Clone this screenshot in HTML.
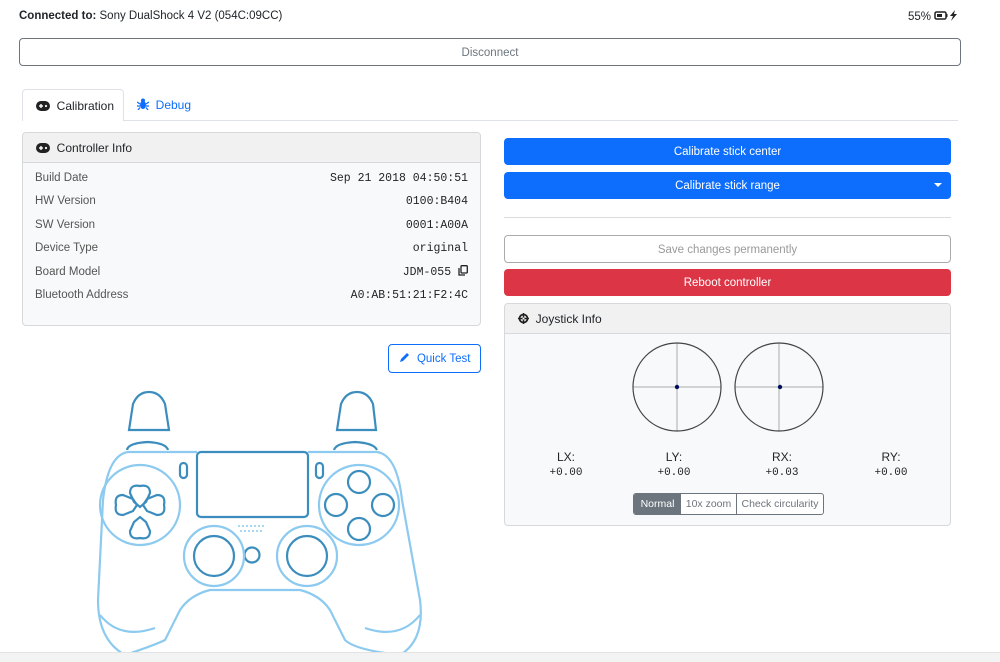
<!DOCTYPE html>
<html><head><meta charset="utf-8"><style>
*{box-sizing:border-box;margin:0;padding:0}
body{width:1000px;height:662px;background:#fff;font-family:"Liberation Sans",sans-serif;font-size:12px;color:#212529;position:relative;overflow:hidden}
.a{position:absolute}
.mono{font-family:"Liberation Mono",monospace;font-size:11px}
.btn{position:absolute;border-radius:4px;text-align:center;font-size:11.5px}
</style></head><body>
<div class="a" style="left:19px;top:10px;font-size:11.5px"><b>Connected to:</b> Sony DualShock 4 V2 (054C:09CC)</div>
<div class="a" style="left:908px;top:10px;font-size:11.5px">55%
<svg width="26" height="11" viewBox="0 0 26 11" style="vertical-align:-1px"><rect x="1" y="2" width="11" height="7" rx="1.5" fill="none" stroke="#222" stroke-width="1.5"/><rect x="3" y="4" width="5" height="3" fill="#222"/><rect x="12" y="4" width="1.5" height="3" fill="#222"/><path d="M21 0 L16 6 H19 L17 11 L23 4 H20 Z" fill="#222"/></svg></div>
<div class="btn" style="left:19px;top:38px;width:942px;height:28px;border:1px solid #6c757d;color:#6c757d;line-height:28px">Disconnect</div>

<div class="a" style="left:22px;top:120px;width:936px;height:1px;background:#dee2e6"></div>
<div class="a" style="left:22px;top:89px;width:102px;height:32px;border:1px solid #dee2e6;border-bottom:none;border-radius:4px 4px 0 0;background:#fff;padding:9px 0 0 13px;font-size:12px">
<svg width="14" height="10" viewBox="0 0 14 10" style="vertical-align:-1px"><rect x="0" y="0" width="14" height="10" rx="5" fill="#222"/><rect x="3" y="4.3" width="4" height="1.4" fill="#fff"/><rect x="4.3" y="3" width="1.4" height="4" fill="#fff"/><circle cx="10" cy="5" r="1.1" fill="#fff"/></svg>&nbsp; Calibration</div>
<div class="a" style="left:137px;top:98px;color:#0d6efd;font-size:12px">
<svg width="12" height="12" viewBox="0 0 12 12" style="vertical-align:-1px"><ellipse cx="6" cy="7" rx="3" ry="4" fill="#0d6efd"/><circle cx="6" cy="2.5" r="2" fill="#0d6efd"/><path d="M0 4 L3 6 M12 4 L9 6 M0 8 H3 M12 8 H9 M1 12 L3 9.5 M11 12 L9 9.5" stroke="#0d6efd" stroke-width="1.3"/></svg>&nbsp; Debug</div>

<div class="a" style="left:22px;top:132px;width:459px;height:194px;border:1px solid #d6d8db;border-radius:4px;background:#f8f9fa;overflow:hidden">
<div style="height:30px;background:#f1f1f1;border-bottom:1px solid #d6d8db;padding:8px 0 0 13px;font-size:12px">
<svg width="14" height="10" viewBox="0 0 14 10" style="vertical-align:-1px"><rect x="0" y="0" width="14" height="10" rx="5" fill="#222"/><rect x="3" y="4.3" width="4" height="1.4" fill="#fff"/><rect x="4.3" y="3" width="1.4" height="4" fill="#fff"/><circle cx="10" cy="5" r="1.1" fill="#fff"/></svg>&nbsp; Controller Info</div>
</div>
<div class="a" style="left:35px;top:167px;color:#555;line-height:23.4px;font-size:11.5px">Build Date<br>HW Version<br>SW Version<br>Device Type<br>Board Model<br>Bluetooth Address</div>
<div class="a mono" style="right:532px;top:167px;line-height:23.4px;text-align:right;font-size:11.5px">Sep 21 2018 04:50:51<br>0100:B404<br>0001:A00A<br>original<br>JDM-055 <svg width="10" height="11" viewBox="0 0 10 11" style="vertical-align:-1px"><rect x="3" y="0.7" width="6.3" height="7.3" rx="1" fill="none" stroke="#222" stroke-width="1.3"/><path d="M1 3 V10 H7" fill="none" stroke="#222" stroke-width="1.3"/></svg><br>A0:AB:51:21:F2:4C</div>

<div class="btn" style="left:388px;top:344px;width:93px;height:29px;border:1px solid #0d6efd;color:#0d6efd;line-height:28px">
<svg width="12" height="12" viewBox="0 0 12 12" style="vertical-align:-1px"><path d="M1 11 L2 8 L8 2 L10 4 L4 10 Z" fill="#0d6efd"/></svg>&nbsp; Quick Test</div>

<svg class="a" style="left:95px;top:385px" width="340" height="277" viewBox="95 385 340 277">
<g fill="none" stroke-width="2.2">
<g stroke="#3b8dbd">
<path d="M129 430 L133 404 Q138 392 149 392 Q160 392 165 404 L169 430 Z"/>
<path d="M337 430 L341 404 Q346 392 357 392 Q368 392 373 404 L376 430 Z"/>
<path d="M127 450 Q128 443 148 442 Q166 443 168 450"/>
<path d="M334 450 Q336 443 355 442 Q374 443 377 450"/>
<rect x="197" y="452" width="111" height="65" rx="4"/>
<rect x="180" y="463" width="7" height="15" rx="3.5"/>
<rect x="316" y="463" width="7" height="15" rx="3.5"/>
<path d="M140 486 Q150 484 150 493 L146 502 L140 507 L134 502 L130 493 Q130 484 140 486 Z"/>
<path d="M140 538 Q150 540 150 531 L146 522 L140 517 L134 522 L130 531 Q130 540 140 538 Z"/>
<path d="M116 505 Q114 495 123 495 L133 499 L137 505 L133 511 L123 515 Q114 515 116 505 Z"/>
<path d="M164 505 Q166 495 157 495 L147 499 L143 505 L147 511 L157 515 Q166 515 164 505 Z"/>
<circle cx="359" cy="482" r="11"/><circle cx="359" cy="529" r="11"/><circle cx="336" cy="505" r="11"/><circle cx="383" cy="505" r="11"/>
<circle cx="214" cy="556" r="20"/><circle cx="307" cy="556" r="20"/><circle cx="252" cy="555" r="7.5"/>
</g>
<g stroke="#8ccaf0">
<path d="M128 452 L197 452 M308 452 L377 452"/>
<path d="M128 452 Q108 455 103 500 L98 600 Q98 640 125 655 M377 452 Q397 455 402 500 L420 600 Q425 640 400 655"/>
<path d="M125 655 Q155 645 165 640 L180 610 Q190 595 210 590 L300 590 Q320 595 330 610 L345 640 Q355 650 400 655"/>
<path d="M100 615 Q120 640 155 628 M420 615 Q400 640 365 628"/>
<circle cx="140" cy="505" r="40"/><circle cx="359" cy="505" r="40"/>
<circle cx="214" cy="556" r="30"/><circle cx="307" cy="556" r="30"/>
</g>
<g stroke="#8ccaf0" stroke-dasharray="2 2" stroke-width="1.5"><path d="M238 526 H266 M240 531 H264"/></g>
</g></svg>
<div class="a" style="left:0;top:652px;width:1000px;height:10px;background:#f3f3f3;border-top:1px solid #e3e3e3"></div>

<div class="btn" style="left:504px;top:138px;width:447px;height:27px;background:#0d6efd;color:#fff;line-height:29px">Calibrate stick center</div>
<div class="btn" style="left:504px;top:172px;width:447px;height:27px;background:#0d6efd;color:#fff;line-height:29px">Calibrate stick range<span style="position:absolute;right:9px;top:11px;border:4px solid transparent;border-top:4px solid #fff;border-bottom:none"></span></div>
<div class="a" style="left:504px;top:217px;width:447px;height:1px;background:#dcdcdc"></div>
<div class="btn" style="left:504px;top:235px;width:447px;height:28px;border:1px solid #ababab;color:#9a9a9a;line-height:28px">Save changes permanently</div>
<div class="btn" style="left:504px;top:269px;width:447px;height:27px;background:#dc3545;color:#fff;line-height:29px">Reboot controller</div>

<div class="a" style="left:504px;top:303px;width:447px;height:223px;border:1px solid #d6d8db;border-radius:4px;background:#f8f9fa;overflow:hidden">
<div style="height:30px;background:#f1f1f1;border-bottom:1px solid #d6d8db;padding:8px 0 0 13px">
<svg width="11" height="11" viewBox="0 0 11 11" style="vertical-align:-1px"><circle cx="5.5" cy="5.5" r="4" fill="none" stroke="#222" stroke-width="1.8"/><path d="M5.5 0 V11 M0 5.5 H11" stroke="#222" stroke-width="1.5"/><circle cx="5.5" cy="5.5" r="1" fill="#fff"/></svg>&nbsp; Joystick Info</div>
</div>
<svg class="a" style="left:630px;top:340px" width="200" height="95">
<g stroke="#aaa" stroke-width="1"><path d="M3 47 H91 M47 3 V91 M105 47 H193 M149 3 V91"/></g>
<circle cx="47" cy="47" r="44" fill="none" stroke="#444" stroke-width="1.2"/>
<circle cx="149" cy="47" r="44" fill="none" stroke="#444" stroke-width="1.2"/>
<circle cx="47" cy="47" r="2.2" fill="#001060"/><circle cx="150" cy="47" r="2.2" fill="#001060"/>
</svg>
<div class="a" style="left:536px;top:450px;width:60px;text-align:center">LX:<div class="mono" style="margin-top:3px">+0.00</div></div>
<div class="a" style="left:644px;top:450px;width:60px;text-align:center">LY:<div class="mono" style="margin-top:3px">+0.00</div></div>
<div class="a" style="left:752px;top:450px;width:60px;text-align:center">RX:<div class="mono" style="margin-top:3px">+0.03</div></div>
<div class="a" style="left:861px;top:450px;width:60px;text-align:center">RY:<div class="mono" style="margin-top:3px">+0.00</div></div>
<div class="a" style="left:633px;top:493px;height:22px;border:1px solid #6c757d;border-radius:3px;display:flex;font-size:10.5px;line-height:20px;overflow:hidden;color:#6c757d;background:#fff">
<div style="width:47px;text-align:center;background:#6c757d;color:#fff">Normal</div>
<div style="width:56px;text-align:center;border-right:1px solid #6c757d">10x zoom</div>
<div style="width:86px;text-align:center">Check circularity</div></div>
</body></html>
